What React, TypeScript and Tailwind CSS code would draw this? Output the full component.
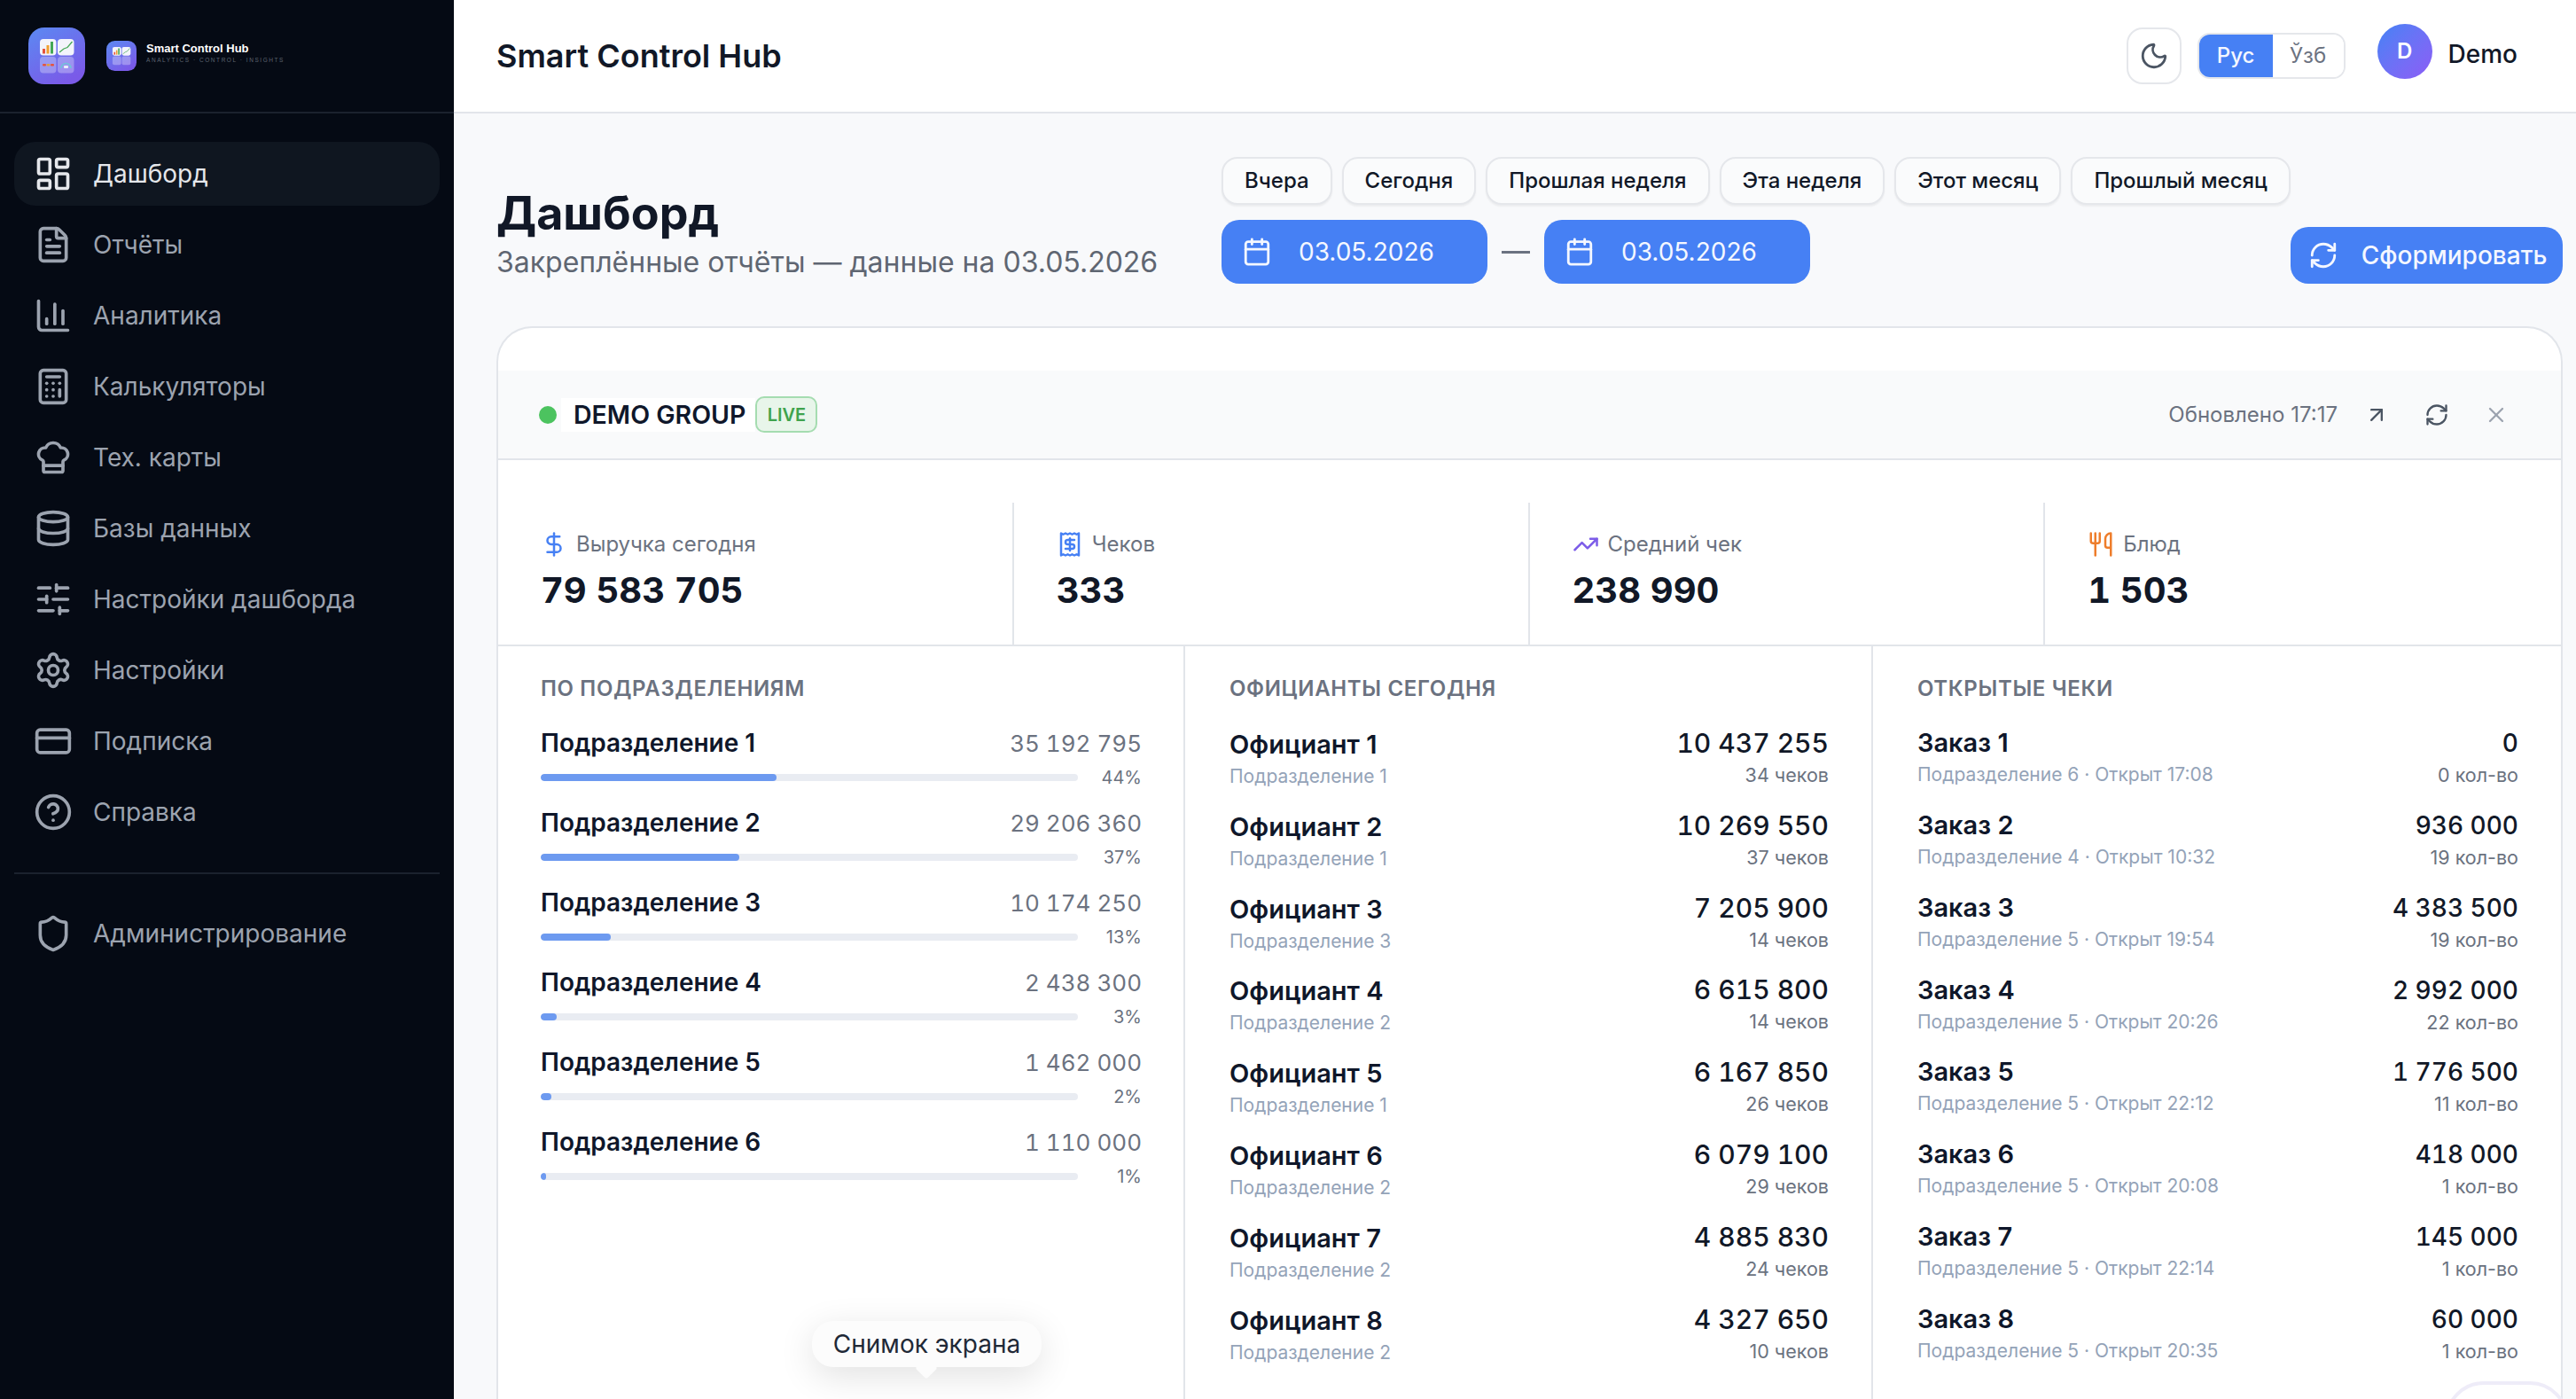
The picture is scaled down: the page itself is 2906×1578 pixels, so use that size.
import React from "react";
import {
  LayoutDashboard, FileText, ChartColumn, Calculator, ChefHat, Database, SlidersHorizontal,
  Settings, CreditCard, CircleHelp, Shield, Moon, Calendar, RefreshCw, ArrowUpRight, X,
  DollarSign, Receipt, TrendingUp, Utensils,
} from "lucide-react";

function Logo({ size, full }: { size: number; full?: boolean }) {
  const id = full ? "lgA" : "lgB";
  return (
    <svg width={size} height={size} viewBox="0 0 64 64" className="shrink-0">
      <defs>
        <linearGradient id={id} x1="0" y1="0" x2="0.6" y2="1">
          <stop offset="0" stopColor="#5b8af2" />
          <stop offset="1" stopColor="#7a5ae8" />
        </linearGradient>
      </defs>
      <rect width="64" height="64" rx="18" fill={`url(#${id})`} />
      <rect x="13" y="13" width="18.5" height="18.5" rx="4" fill="#f3f4fb" />
      <rect x="33" y="13" width="18.5" height="18.5" rx="4" fill="#f3f4fb" />
      <rect x="13" y="33" width="18.5" height="18.5" rx="4" fill="#ffffff" fillOpacity="0.3" />
      <rect x="33" y="33" width="18.5" height="18.5" rx="4" fill="#ffffff" fillOpacity="0.3" />
      <rect x="16" y="24" width="3" height="5.5" fill="#e5533d" />
      <rect x="20.5" y="20" width="3" height="9.5" fill="#f0a030" />
      <rect x="25" y="16" width="3" height="13.5" fill="#45a855" />
      <path d="M35 28 L40 24 L44 22.5 L49.5 16" fill="none" stroke="#45a855" strokeWidth="1.3" />
      {full ? (
        <>
          <rect x="16" y="41" width="4" height="2.5" rx="1" fill="#e5533d" />
          <rect x="20.5" y="41" width="4" height="2.5" rx="1" fill="#e0a040" />
          <rect x="25" y="41" width="4" height="2.5" rx="1" fill="#e5533d" />
          <path d="M37 46 a5.5 5.5 0 0 1 11 0" fill="none" stroke="#6fc3d8" strokeWidth="1.6" />
          <rect x="40" y="43" width="5" height="3" rx="1" fill="#e8ecfa" />
        </>
      ) : null}
    </svg>
  );
}

const nav = [
  { icon: LayoutDashboard, label: "Дашборд", active: true },
  { icon: FileText, label: "Отчёты" },
  { icon: ChartColumn, label: "Аналитика" },
  { icon: Calculator, label: "Калькуляторы" },
  { icon: ChefHat, label: "Тех. карты" },
  { icon: Database, label: "Базы данных" },
  { icon: SlidersHorizontal, label: "Настройки дашборда" },
  { icon: Settings, label: "Настройки" },
  { icon: CreditCard, label: "Подписка" },
  { icon: CircleHelp, label: "Справка" },
];

function NavItem({ icon: Icon, label, active }: { icon: React.ElementType; label: string; active?: boolean }) {
  return (
    <div
      className={
        active
          ? "flex h-[72px] items-center gap-[23px] rounded-[24px] bg-[#0f1620] pl-[22px] text-[28px] text-[#e5e7eb]"
          : "flex h-[72px] items-center gap-[23px] rounded-[24px] pl-[22px] text-[28px] text-[#9ca3af]"
      }
    >
      <Icon size={44} strokeWidth={2} className="shrink-0" />
      <span>{label}</span>
    </div>
  );
}

const presets = ["Вчера", "Сегодня", "Прошлая неделя", "Эта неделя", "Этот месяц", "Прошлый месяц"];

function DateBtn() {
  return (
    <div className="flex h-[72px] w-[300px] items-center gap-[30px] rounded-[20px] bg-[#4680f4] pl-[23px] text-[28px] text-[#f4f7ff]">
      <Calendar size={34} strokeWidth={2} />
      <span>03.05.2026</span>
    </div>
  );
}

const stats = [
  { icon: DollarSign, color: "text-[#4680f4]", label: "Выручка сегодня", value: "79 583 705" },
  { icon: Receipt, color: "text-[#4680f4]", label: "Чеков", value: "333" },
  { icon: TrendingUp, color: "text-[#7c5ce8]", label: "Средний чек", value: "238 990" },
  { icon: Utensils, color: "text-[#ee7d2b]", label: "Блюд", value: "1 503" },
];

const depts = [
  ["Подразделение 1", "35 192 795", "44%", 266],
  ["Подразделение 2", "29 206 360", "37%", 224],
  ["Подразделение 3", "10 174 250", "13%", 79],
  ["Подразделение 4", "2 438 300", "3%", 18],
  ["Подразделение 5", "1 462 000", "2%", 12],
  ["Подразделение 6", "1 110 000", "1%", 6],
] as const;

const waiters = [
  ["Официант 1", "Подразделение 1", "10 437 255", "34 чеков"],
  ["Официант 2", "Подразделение 1", "10 269 550", "37 чеков"],
  ["Официант 3", "Подразделение 3", "7 205 900", "14 чеков"],
  ["Официант 4", "Подразделение 2", "6 615 800", "14 чеков"],
  ["Официант 5", "Подразделение 1", "6 167 850", "26 чеков"],
  ["Официант 6", "Подразделение 2", "6 079 100", "29 чеков"],
  ["Официант 7", "Подразделение 2", "4 885 830", "24 чеков"],
  ["Официант 8", "Подразделение 2", "4 327 650", "10 чеков"],
];

const orders = [
  ["Заказ 1", "Подразделение 6 · Открыт 17:08", "0", "0 кол-во"],
  ["Заказ 2", "Подразделение 4 · Открыт 10:32", "936 000", "19 кол-во"],
  ["Заказ 3", "Подразделение 5 · Открыт 19:54", "4 383 500", "19 кол-во"],
  ["Заказ 4", "Подразделение 5 · Открыт 20:26", "2 992 000", "22 кол-во"],
  ["Заказ 5", "Подразделение 5 · Открыт 22:12", "1 776 500", "11 кол-во"],
  ["Заказ 6", "Подразделение 5 · Открыт 20:08", "418 000", "1 кол-во"],
  ["Заказ 7", "Подразделение 5 · Открыт 22:14", "145 000", "1 кол-во"],
  ["Заказ 8", "Подразделение 5 · Открыт 20:35", "60 000", "1 кол-во"],
];

function SectionTitle({ children }: { children: React.ReactNode }) {
  return <div className="h-[36px] text-[24px] leading-[36px] font-semibold tracking-[0.65px] text-[#6b7280]">{children}</div>;
}

export default function App() {
  return (
    <div className="relative flex h-[1578px] w-[2906px] overflow-hidden bg-[#f8f9fb] [font-family:Inter,sans-serif]">
      <aside className="flex h-full w-[512px] shrink-0 flex-col bg-[#050a14]">
        <div className="flex h-[128px] shrink-0 items-center gap-[24px] border-b-2 border-[#1b222e] pl-[32px]">
          <Logo size={64} full />
          <div className="flex items-center gap-[11px]">
            <Logo size={34} />
            <div className="mb-[7px] flex flex-col">
              <span className="text-[13px] leading-[15px] font-bold text-white [font-family:'Liberation_Sans',sans-serif]">Smart Control Hub</span>
              <span className="text-[6.5px] leading-[11px] tracking-[1.55px] text-[#5d6470] [font-family:'Liberation_Sans',sans-serif]">ANALYTICS · CONTROL · INSIGHTS</span>
            </div>
          </div>
        </div>
        <nav className="flex flex-col gap-[8px] px-[16px] pt-[32px]">
          {nav.map((n) => (
            <NavItem key={n.label} icon={n.icon} label={n.label} active={n.active} />
          ))}
        </nav>
        <div className="mx-[16px] mt-[32px] h-[2px] shrink-0 bg-[#1b222e]" />
        <div className="px-[16px] pt-[31px]">
          <NavItem icon={Shield} label="Администрирование" />
        </div>
      </aside>

      <main className="flex min-w-0 flex-1 flex-col">
        <header className="flex h-[128px] shrink-0 items-center justify-between border-b-2 border-[#e2e5ea] bg-white pl-[48px] pr-[66px]">
          <div className="text-[36px] font-semibold text-[#111827]">Smart Control Hub</div>
          <div className="flex items-center">
            <div className="flex h-[64px] w-[62px] items-center justify-center rounded-[18px] border-2 border-[#e5e7eb] bg-white text-[#4b5563]">
              <Moon size={34} strokeWidth={2} />
            </div>
            <div className="ml-[18px] flex h-[52px] w-[167px] overflow-hidden rounded-[14px] border-2 border-[#e5e7eb] text-[24px]">
              <div className="flex w-[83px] items-center justify-center bg-[#4680f4] font-medium text-[#f4f7ff]">Рус</div>
              <div className="flex flex-1 items-center justify-center bg-white text-[#6b7280]">Ўзб</div>
            </div>
            <div className="mb-[10px] ml-[36px] flex h-[62px] w-[62px] items-center justify-center rounded-full bg-gradient-to-br from-[#3f82f5] to-[#8b5cf6] text-[24px] font-semibold text-white">
              D
            </div>
            <div className="mb-[4px] ml-[18px] text-[28px] font-medium text-[#111827]">Demo</div>
          </div>
        </header>

        <section className="flex h-[240px] shrink-0 pl-[48px] pr-[15px] pt-[49px]">
          <div className="w-[745px] shrink-0 pt-[32px]">
            <h1 className="text-[52px] leading-[64px] font-bold text-[#111827]">Дашборд</h1>
            <p className="whitespace-nowrap text-[32px] leading-[46px] text-[#5f6672]">Закреплённые отчёты — данные на 03.05.2026</p>
          </div>
          <div className="ml-[73px]">
            <div className="flex gap-[11px]">
              {presets.map((p) => (
                <div
                  key={p}
                  className="flex h-[54px] items-center whitespace-nowrap rounded-[18px] border-2 border-[#e5e7eb] bg-[#fafbfc] px-[24px] text-[24px] font-medium text-[#111827] shadow-[0_2px_2px_rgba(0,0,0,0.05)]"
                >
                  {p}
                </div>
              ))}
            </div>
            <div className="mt-[17px] flex items-center gap-[16px]">
              <DateBtn />
              <div className="h-[3px] w-[32px] bg-[#6b7280]" />
              <DateBtn />
            </div>
          </div>
          <div className="ml-auto mt-[79px] flex h-[64px] w-[308px] items-center gap-[26px] rounded-[20px] bg-[#4680f4] pl-[20px] text-[28px] font-medium text-[#f4f7ff]">
            <RefreshCw size={34} strokeWidth={2} />
            <span>Сформировать</span>
          </div>
        </section>

        <section className="ml-[48px] mr-[15px] flex min-h-0 flex-1 flex-col overflow-hidden rounded-t-[40px] border-x-2 border-t-2 border-[#e2e5ea] bg-white pt-[48px]">
          <div className="flex h-[101px] shrink-0 items-center justify-between border-b-2 border-[#e2e5ea] bg-[#f9fafb] pl-[46px] pr-[59px]">
            <div className="flex items-center">
              <span className="h-[20px] w-[20px] rounded-full bg-[#4cc35f]" />
              <span className="ml-[5px] flex h-[38px] items-center bg-white pl-[14px] pr-[11px] pt-[2px] text-[28.5px] font-semibold text-[#0f172a]">DEMO GROUP</span>
              <span className="flex h-[41px] w-[70px] items-center justify-center rounded-[10px] border-2 border-[#a5dcb0] bg-[#e8f5ea] text-[20px] font-semibold text-[#3fa34d]">LIVE</span>
            </div>
            <div className="flex items-center text-[#6b7280]">
              <span className="text-[24px]">Обновлено 17:17</span>
              <ArrowUpRight size={28} strokeWidth={2} className="ml-[30px] text-[#4b5563]" />
              <RefreshCw size={28} strokeWidth={2} className="ml-[40px] text-[#4b5563]" />
              <X size={28} strokeWidth={2} className="ml-[39px] text-[#9ca3af]" />
            </div>
          </div>

          <div className="grid shrink-0 grid-cols-4 border-b-2 border-[#e2e5ea] pt-[48px]">
            {stats.map((s, i) => {
              const Icon = s.icon;
              return (
                <div key={s.label} className={i < 3 ? "h-[160px] border-r-2 border-[#e2e5ea] pl-[48px] pt-[29px]" : "h-[160px] pl-[48px] pt-[29px]"}>
                  <div className="flex h-[36px] items-center gap-[10px] text-[24px] text-[#6b7280]">
                    <Icon size={30} strokeWidth={2} className={s.color} />
                    <span>{s.label}</span>
                  </div>
                  <div className="mt-[8px] text-[40px] leading-[52px] font-bold tabular-nums text-[#111827]">{s.value}</div>
                </div>
              );
            })}
          </div>

          <div className="grid min-h-0 flex-1 grid-cols-[775px_776px_1fr]">
            <div className="border-r-2 border-[#e2e5ea] pl-[48px] pr-[47px] pt-[30px]">
              <SectionTitle>ПО ПОДРАЗДЕЛЕНИЯМ</SectionTitle>
              <div className="mt-[23px] flex flex-col gap-[16px]">
                {depts.map(([name, val, pct, w]) => (
                  <div key={name} className="h-[74px]">
                    <div className="flex h-[40px] items-center justify-between">
                      <span className="text-[28px] font-semibold text-[#0f172a]">{name}</span>
                      <span className="text-[26px] tabular-nums text-[#6b7280]">{val}</span>
                    </div>
                    <div className="mt-[4px] flex h-[30px] items-center justify-between">
                      <div className="h-[8px] w-[606px] overflow-hidden rounded-full bg-[#e9ecf2]">
                        <div className="h-full rounded-full bg-[#6d9af0]" style={{ width: w }} />
                      </div>
                      <span className="text-[20px] text-[#6b7280]">{pct}</span>
                    </div>
                  </div>
                ))}
              </div>
            </div>

            <div className="border-r-2 border-[#e2e5ea] pl-[50px] pr-[48px] pt-[30px]">
              <SectionTitle>ОФИЦИАНТЫ СЕГОДНЯ</SectionTitle>
              <div className="mt-[25px] flex flex-col gap-[20.8px]">
                {waiters.map(([n, s, v, c]) => (
                  <div key={n} className="flex h-[72px] justify-between">
                    <div className="pt-[2px]">
                      <div className="text-[29px] leading-[36px] font-semibold text-[#0f172a]">{n}</div>
                      <div className="text-[21px] leading-[36px] text-[#94a3b8]">{s}</div>
                    </div>
                    <div className="text-right">
                      <div className="text-[30px] leading-[36px] font-medium tabular-nums text-[#111827]">{v}</div>
                      <div className="text-[21.5px] leading-[36px] text-[#6b7280]">{c}</div>
                    </div>
                  </div>
                ))}
              </div>
            </div>

            <div className="pl-[50px] pr-[48px] pt-[30px]">
              <SectionTitle>ОТКРЫТЫЕ ЧЕКИ</SectionTitle>
              <div className="mt-[25px] flex flex-col gap-[20.85px]">
                {orders.map(([n, s, v, c]) => (
                  <div key={n} className="flex h-[72px] justify-between">
                    <div>
                      <div className="text-[29px] leading-[36px] font-semibold text-[#0f172a]">{n}</div>
                      <div className="text-[21px] leading-[36px] text-[#94a3b8]">{s}</div>
                    </div>
                    <div className="text-right">
                      <div className="text-[28px] leading-[36px] font-medium tabular-nums text-[#111827]">{v}</div>
                      <div className="text-[21.5px] leading-[36px] text-[#6b7280]">{c}</div>
                    </div>
                  </div>
                ))}
              </div>
            </div>
          </div>
        </section>
      </main>

      <div className="absolute left-[916px] top-[1490px] flex h-[52px] w-[259px] items-center justify-center rounded-[24px] bg-[#fcfcfc] text-[28px] text-[#1f2937] shadow-[0_10px_40px_rgba(0,0,0,0.12)]">
        Снимок экрана
        <div className="absolute left-[120px] top-[44px] h-[18px] w-[18px] rotate-45 rounded-[3px] bg-[#fcfcfc]" />
      </div>
      <div className="absolute left-[2758px] top-[1558px] h-[100px] w-[140px] rounded-[44px] border-[4px] border-[#eeecf8]" />
    </div>
  );
}
